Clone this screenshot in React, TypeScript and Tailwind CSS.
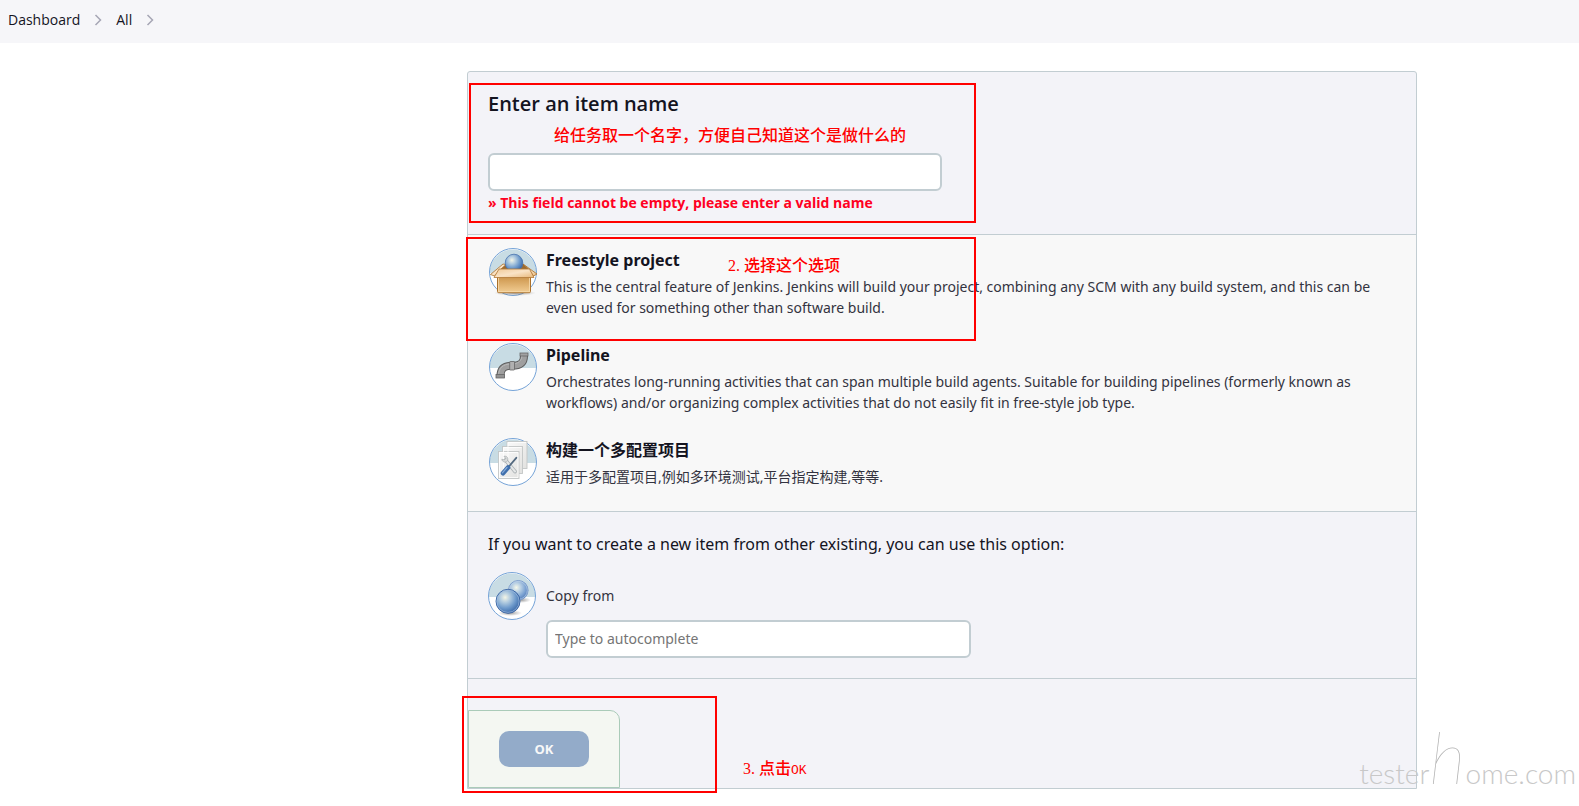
import React, { useState } from 'react';

interface ItemType {
  id: string;
  title: string;
  description: string;
  icon: React.ReactNode;
}

const Gradients: React.FC = () => (
  <svg className="absolute size-0" aria-hidden="true">
    <defs>
      <radialGradient id="ball" cx="0.38" cy="0.34" r="0.68">
        <stop offset="0" stopColor="#f4f5e6" />
        <stop offset="0.3" stopColor="#b4cde0" />
        <stop offset="0.65" stopColor="#6f9bcc" />
        <stop offset="1" stopColor="#3a69a8" />
      </radialGradient>
      <radialGradient id="ballPale" cx="0.4" cy="0.36" r="0.68">
        <stop offset="0" stopColor="#f6f8ea" />
        <stop offset="0.35" stopColor="#b6cee3" />
        <stop offset="0.7" stopColor="#7ba2d2" />
        <stop offset="1" stopColor="#4f79b6" />
      </radialGradient>
      <radialGradient id="shadow">
        <stop offset="0" stopColor="#555" stopOpacity="0.6" />
        <stop offset="1" stopColor="#777" stopOpacity="0" />
      </radialGradient>
      <linearGradient id="carton" x1="0" y1="0" x2="0" y2="1">
        <stop offset="0" stopColor="#c08a45" />
        <stop offset="0.25" stopColor="#d39f58" />
        <stop offset="1" stopColor="#f2cd94" />
      </linearGradient>
      <linearGradient id="flap" x1="0" y1="0" x2="1" y2="1">
        <stop offset="0" stopColor="#f0c998" />
        <stop offset="0.5" stopColor="#f9e3c6" />
        <stop offset="1" stopColor="#e8b87a" />
      </linearGradient>
      <linearGradient id="sheet" x1="0" y1="0" x2="1" y2="1">
        <stop offset="0" stopColor="#fafafa" />
        <stop offset="1" stopColor="#e2e2e0" />
      </linearGradient>
    </defs>
  </svg>
);

// Round badge shared by all item icons
const Badge: React.FC<{ children: React.ReactNode }> = ({ children }) => (
  <svg className="size-12 shrink-0 overflow-visible" viewBox="0 0 48 48" aria-hidden="true">
    <circle cx="24" cy="24" r="23.5" fill="#fff" />
    <path d="M0.5 25a23.5 23.5 0 0 1 47 0z" fill="#c8dce4" />
    <circle cx="24" cy="24" r="23.5" fill="none" stroke="#76a4d8" />
    {children}
  </svg>
);

const FreestyleIcon = () => (
  <Badge>
    <ellipse cx="26" cy="45" rx="21" ry="3" fill="url(#shadow)" />
    <path d="M10 21L16 16H34L40 21z" fill="#9a6a30" />
    <path d="M14 16L1.5 26.5L5.5 28L12 21L17 16.5z" fill="url(#flap)" stroke="#a9702c" strokeWidth="0.8" />
    <path d="M34 16L48 26L44.5 28L40 21.5z" fill="url(#flap)" stroke="#a9702c" strokeWidth="0.8" />
    <circle cx="25" cy="15" r="8.8" fill="url(#ball)" stroke="#4772ad" strokeWidth="0.8" />
    <path d="M8.5 27H41.5V43.5Q41.5 44.7 40.3 44.7H9.7Q8.5 44.7 8.5 43.5z" fill="url(#carton)" stroke="#a9702c" />
    <path d="M9.5 30V43.7H40.5V30" fill="none" stroke="#f7dcae" strokeWidth="0.8" />
    <path d="M10 21H40.5L45 29.5H5z" fill="url(#flap)" stroke="#b37a38" strokeWidth="0.8" />
  </Badge>
);

const PipelineIcon = () => (
  <Badge>
    <path d="M11.5 35V33C11.5 25.5 15 22.8 23 22.8C31 22.8 35 20 35 13V10" fill="none" stroke="#5e5e5e" strokeWidth="8" />
    <path d="M11.5 34V33C11.5 25.5 15 22.8 23 22.8C31 22.8 35 20 35 13V11" fill="none" stroke="#9f9f9f" strokeWidth="6" />
    <path d="M9.5 33C9.5 25 14 21 22 21C29 21 33 18 33 12" fill="none" stroke="#b9b9b9" strokeWidth="1" />
    <rect x="7" y="31.5" width="8.5" height="3.5" fill="#929292" stroke="#666" strokeWidth="0.8" />
    <rect x="31" y="10" width="8" height="3" fill="#a2a2a2" stroke="#666" strokeWidth="0.8" />
    <rect x="20.7" y="18.5" width="4.8" height="8.5" rx="0.6" fill="#b0b0b0" stroke="#666" strokeWidth="0.8" />
  </Badge>
);

const MultiConfigIcon = () => (
  <Badge>
    <g stroke="#c3c6c6" strokeWidth="0.9" fill="url(#sheet)">
      <rect x="18" y="3.5" width="20" height="27" />
      <rect x="13.5" y="8.5" width="20" height="27" />
      <rect x="9.5" y="13.5" width="20.5" height="27" />
    </g>
    <g fill="none" stroke="#fff" strokeWidth="0.8">
      <path d="M19 30V4.5H37" />
      <path d="M14.5 35V9.5H32.5" />
      <path d="M10.5 39.5V14.5H29V39.5z" />
    </g>
    <path d="M16.5 22L26 33.5" stroke="#aab0b3" strokeWidth="3.6" strokeLinecap="round" />
    <path d="M16.5 22L26 33.5" stroke="#e6e8e8" strokeWidth="2" strokeLinecap="round" />
    <path d="M15 18.3C18 17.5 19.8 20.5 18.4 23C16.5 25 13 24 12.8 21.2L15.4 22L16.8 20.4z" fill="#d9dcdc" stroke="#a5aaac" strokeWidth="0.7" />
    <path d="M27.3 19.8L19.5 29" stroke="#53697f" strokeWidth="1.8" strokeLinecap="round" />
    <path d="M19 29.5L14 35.3" stroke="#3f6fac" strokeWidth="4.6" strokeLinecap="round" />
    <path d="M18 29.5L13.4 34.8" stroke="#86abd9" strokeWidth="1.2" strokeLinecap="round" />
  </Badge>
);

const CopyIcon = () => (
  <Badge>
    <ellipse cx="33" cy="28" rx="10" ry="3" fill="url(#shadow)" />
    <ellipse cx="22" cy="41" rx="12" ry="3" fill="url(#shadow)" />
    <circle cx="30.3" cy="18.3" r="9.8" fill="url(#ballPale)" stroke="#6f92c6" strokeWidth="0.8" />
    <circle cx="30.3" cy="18.3" r="9" fill="none" stroke="#c4d6ec" strokeWidth="0.6" />
    <circle cx="20" cy="29.3" r="12" fill="url(#ball)" stroke="#34609f" strokeWidth="0.9" />
    <circle cx="20" cy="29.3" r="11.1" fill="none" stroke="#a9c3e2" strokeWidth="0.6" />
  </Badge>
);

const ITEM_TYPES: ItemType[] = [
  {
    id: 'freestyle',
    title: 'Freestyle project',
    description:
      'This is the central feature of Jenkins. Jenkins will build your project, combining any SCM with any build system, and this can be even used for something other than software build.',
    icon: <FreestyleIcon />,
  },
  {
    id: 'pipeline',
    title: 'Pipeline',
    description:
      'Orchestrates long-running activities that can span multiple build agents. Suitable for building pipelines (formerly known as workflows) and/or organizing complex activities that do not easily fit in free-style job type.',
    icon: <PipelineIcon />,
  },
  {
    id: 'matrix',
    title: '构建一个多配置项目',
    description: '适用于多配置项目,例如多环境测试,平台指定构建,等等.',
    icon: <MultiConfigIcon />,
  },
];

const Chevron = () => (
  <svg className="h-3 w-2" viewBox="0 0 8 12" fill="none" stroke="#a6a6b5" strokeWidth="1.5" aria-hidden="true">
    <path d="M1.5 1L6.5 6L1.5 11" />
  </svg>
);

// Red frames and notes laid over the form
const Annotations: React.FC = () => (
  <div className="pointer-events-none absolute inset-0 font-['Liberation_Serif','Noto_Sans_CJK_SC',serif] text-base leading-5 font-medium whitespace-nowrap text-[#ff0000]">
    <div className="absolute top-[11px] left-[1px] h-[140px] w-[507px] border-2 border-[#ff0000]" />
    <div className="absolute top-[165px] -left-[2px] h-[104px] w-[510px] border-2 border-[#ff0000]" />
    <div className="absolute top-[624px] -left-[6px] h-[97px] w-[255px] border-2 border-[#ff0000]" />
    <p className="absolute top-[54px] left-[86px]">给任务取一个名字，方便自己知道这个是做什么的</p>
    <p className="absolute top-[184px] left-[260px]">2. 选择这个选项</p>
    <p className="absolute top-[687px] left-[275px]">
      3. 点击<span className="font-['Liberation_Mono',monospace] text-[13px]">OK</span>
    </p>
  </div>
);

const App: React.FC = () => {
  const [name, setName] = useState('');
  const [from, setFrom] = useState('');

  return (
    <div className="relative min-h-screen bg-white font-['Noto_Sans','Noto_Sans_CJK_SC',sans-serif] text-sm text-[#14141f]">
      <Gradients />

      {/* Breadcrumbs */}
      <nav className="flex h-[43px] items-center gap-[14px] bg-[#f6f6f9] px-2 pb-1 font-['Open_Sans',sans-serif]">
        <a href="#dashboard">Dashboard</a>
        <Chevron />
        <a href="#all">All</a>
        <Chevron />
      </nav>

      <main className="pt-7 pb-[17px] pl-[305px]">
        <form
          className="relative mx-auto max-w-[950px] rounded-t-[3px] border border-[#c2cdd2] bg-[#f3f3f8]"
          onSubmit={(e) => e.preventDefault()}
        >
          {/* Name */}
          <section className="border-b border-[#c2cdd2] px-5 pt-5 pb-[21px] font-['Open_Sans',sans-serif]">
            <label htmlFor="name" className="block text-xl leading-6 font-semibold">
              Enter an item name
            </label>
            <input
              id="name"
              type="text"
              value={name}
              onChange={(e) => setName(e.target.value)}
              className="mt-[37px] block h-[38px] w-full max-w-[454px] rounded-md border-2 border-[#c2cdd2] bg-white px-2 outline-none"
            />
            <p className="mt-px leading-[21px] font-bold text-[#ff0022]">
              » This field cannot be empty, please enter a valid name
            </p>
          </section>

          {/* Item types */}
          <ul className="space-y-[25px] border-b border-[#c2cdd2] bg-[#f8f8f8] px-5 pt-[13px] pb-6">
            {ITEM_TYPES.map((item) => (
              <li key={item.id} className="flex gap-[9px] pl-px">
                {item.icon}
                <div className="h-fit">
                  <h2 className="text-base leading-6 font-bold">{item.title}</h2>
                  <p className="mt-1 leading-[21px] text-[#333340]">{item.description}</p>
                </div>
              </li>
            ))}
          </ul>

          {/* Copy from */}
          <section className="border-b border-[#c2cdd2] px-5 pt-5 pb-5">
            <p className="text-base leading-6">If you want to create a new item from other existing, you can use this option:</p>
            <div className="mt-4 flex items-center gap-[10px]">
              <CopyIcon />
              <label htmlFor="from" className="text-[#333340]">Copy from</label>
            </div>
            <input
              id="from"
              type="text"
              value={from}
              onChange={(e) => setFrom(e.target.value)}
              placeholder="Type to autocomplete"
              className="ml-[58px] block h-[38px] w-full max-w-[425px] rounded-md border-2 border-[#c2cdd2] bg-white px-[7px] pb-px outline-none placeholder:text-[#757575]"
            />
          </section>

          {/* Submit */}
          <div className="pt-[31px]">
            <div className="w-fit rounded-tr-[10px] border border-[#aacbb9] bg-[#f4f7f2] px-[30px] py-5">
              <button type="submit" className="h-9 w-[90px] rounded-[10px] bg-[#93abc9] text-[13px] font-bold text-[#f8f8f8]">
                OK
              </button>
            </div>
          </div>

          <Annotations />
        </form>
      </main>

      {/* Watermark */}
      <div className="pointer-events-none absolute right-[3px] bottom-[17px] flex items-baseline font-['Lato',sans-serif] text-[28px] leading-8 font-light text-[#c8c8c8]">
        <span>tester</span>
        <span className="text-[72px] font-thin text-[#b4b4b4] italic">h</span>
        <span>ome.com</span>
      </div>
    </div>
  );
};

export default App;
